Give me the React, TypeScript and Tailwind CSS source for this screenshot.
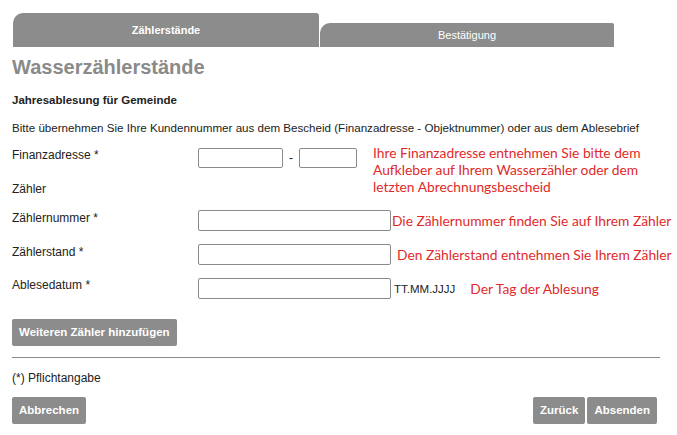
const hint = "font-['Lato','Open_Sans',sans-serif] text-[13.8px] text-[#df2a2a] whitespace-nowrap";

function Field() {
  return <div className="h-[21px] w-[193px] shrink-0 rounded-[2px] border border-[#8a8a8a] bg-white" />;
}

function Btn({ children, className = "" }: { children: React.ReactNode; className?: string }) {
  return (
    <button
      className={
        "h-[27px] rounded-[2px] bg-[#8c8c8c] px-[7px] text-[11.5px] font-bold text-white " + className
      }
    >
      {children}
    </button>
  );
}

export default function App() {
  return (
    <div className="min-h-screen bg-white pl-3 pr-[17px] pt-[13px] font-['Liberation_Sans',Arial,sans-serif] text-[12px] text-[#222]">
      {/* Tabs */}
      <div className="flex items-end gap-px pl-px">
        <div className="flex h-[34px] w-[306px] items-center justify-center rounded-tl-[10px] rounded-tr-[3px] bg-[#8c8c8c] text-[11px] font-bold text-white">
          Zählerstände
        </div>
        <div className="flex h-[24px] w-[294px] items-center justify-center rounded-tl-[10px] rounded-tr-[2px] bg-[#8c8c8c] text-[11px] text-white">
          Bestätigung
        </div>
      </div>

      <h1 className="mt-[9px] text-[20px] font-bold leading-[22px] text-[#8a8a8a]">Wasserzählerstände</h1>

      <p className="mt-[15px] text-[11.5px] font-bold leading-[14px]">Jahresablesung für Gemeinde</p>

      <p className="mt-[14px] whitespace-nowrap text-[11.6px] leading-[14px]">
        Bitte übernehmen Sie Ihre Kundennummer aus dem Bescheid (Finanzadresse - Objektnummer) oder aus dem Ablesebrief
      </p>

      {/* Finanzadresse + Zähler */}
      <div className="mt-[13px] flex items-start">
        <div className="w-[361px] shrink-0">
          <div className="flex items-start">
            <span className="w-[186px] shrink-0 leading-[14px]">Finanzadresse *</span>
            <div className="h-[20px] w-[85px] rounded-[2px] border border-[#8a8a8a]" />
            <span className="w-[16px] text-center leading-[20px]">-</span>
            <div className="h-[20px] w-[58px] rounded-[2px] border border-[#8a8a8a]" />
          </div>
          <div className="mt-[14px] leading-[14px]">Zähler</div>
        </div>
        <p className={hint + " -mt-[4px] leading-[17px]"}>
          Ihre Finanzadresse entnehmen Sie bitte dem
          <br />
          Aufkleber auf Ihrem Wasserzähler oder dem
          <br />
          letzten Abrechnungsbescheid
        </p>
      </div>

      {/* Zählernummer / Zählerstand / Ablesedatum */}
      <div className="mt-[14px] flex flex-col gap-[13px]">
        <div className="flex items-start">
          <span className="w-[186px] shrink-0 pt-[1px] leading-[14px]">Zählernummer *</span>
          <Field />
          <span className={hint + " ml-px self-center leading-[17px]"}>Die Zählernummer finden Sie auf Ihrem Zähler</span>
        </div>
        <div className="flex items-start">
          <span className="w-[186px] shrink-0 pt-[1px] leading-[14px]">Zählerstand *</span>
          <Field />
          <span className={hint + " ml-[6px] self-center leading-[17px]"}>Den Zählerstand entnehmen Sie Ihrem Zähler</span>
        </div>
        <div className="flex items-start">
          <span className="w-[186px] shrink-0 leading-[14px]">Ablesedatum *</span>
          <Field />
          <span className="ml-[3px] self-center text-[11.5px] leading-[14px]">TT.MM.JJJJ</span>
          <span className={hint + " ml-[15px] self-center leading-[17px]"}>Der Tag der Ablesung</span>
        </div>
      </div>

      <Btn className="mt-[20px]">Weiteren Zähler hinzufügen</Btn>

      <div className="mt-[11px] border-t border-[#8a8a8a]" />

      <p className="mt-[13px] leading-[14px]">(*) Pflichtangabe</p>

      <div className="mt-[12px] flex items-start justify-between pr-[3px]">
        <Btn>Abbrechen</Btn>
        <div className="flex gap-[2px]">
          <Btn>Zurück</Btn>
          <Btn>Absenden</Btn>
        </div>
      </div>
    </div>
  );
}
